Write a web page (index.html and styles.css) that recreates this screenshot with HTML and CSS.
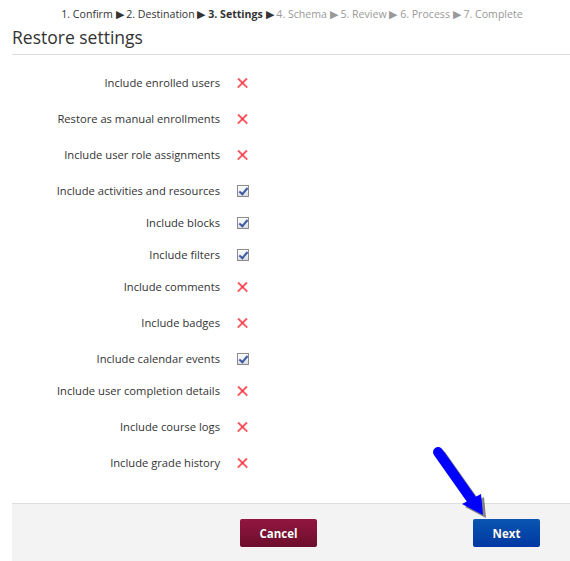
FILE: index.html
```html
<!DOCTYPE html>
<html lang="en">
<head>
  <meta charset="UTF-8">
  <title>Restore settings</title>
  <link rel="stylesheet" href="styles.css">
</head>
<body>

  <div class="steps">
    <span class="done">1. Confirm</span> &#9654;
    <span class="done">2. Destination</span> &#9654;
    <b class="done">3. Settings</b> &#9654;
    <span class="todo">4. Schema &#9654; 5. Review &#9654; 6. Process &#9654; 7. Complete</span>
  </div>

  <div class="page">
    <h2>Restore settings</h2>

    <div class="settings">
      <div class="row off"><span class="label">Include enrolled users</span><span class="no"></span></div>
      <div class="row off"><span class="label">Restore as manual enrollments</span><span class="no"></span></div>
      <div class="row off"><span class="label">Include user role assignments</span><span class="no"></span></div>
      <div class="row on"><span class="label">Include activities and resources</span><span class="yes"></span></div>
      <div class="row on"><span class="label">Include blocks</span><span class="yes"></span></div>
      <div class="row on"><span class="label">Include filters</span><span class="yes"></span></div>
      <div class="row off"><span class="label">Include comments</span><span class="no"></span></div>
      <div class="row off"><span class="label">Include badges</span><span class="no"></span></div>
      <div class="row on"><span class="label">Include calendar events</span><span class="yes"></span></div>
      <div class="row off"><span class="label">Include user completion details</span><span class="no"></span></div>
      <div class="row off"><span class="label">Include course logs</span><span class="no"></span></div>
      <div class="row off"><span class="label">Include grade history</span><span class="no"></span></div>
    </div>

    <div class="actions">
      <button class="btn cancel">Cancel</button>
      <button class="btn next">Next</button>
    </div>
  </div>

  <svg class="pointer" width="80" height="90" viewBox="0 0 80 90">
    <g transform="translate(3,3)" fill="#111" opacity="0.5">
      <line x1="18" y1="12" x2="54" y2="63" stroke="#111" stroke-width="10" stroke-linecap="round"/>
      <polygon points="42,64 61,54 63,75"/>
    </g>
    <line x1="18" y1="12" x2="54" y2="63" stroke="#0000ff" stroke-width="10" stroke-linecap="round"/>
    <polygon points="42,64 61,54 63,75" fill="#0000ff"/>
  </svg>

</body>
</html>
```

FILE: styles.css
```css
body {
  margin: 0;
  font-family: 'Open Sans', 'Liberation Sans', sans-serif;
  color: #333;
  background-color: #fff;
  position: relative;
  height: 561px;
  overflow: hidden;
}

.steps {
  text-align: center;
  font-size: 10.6px;
  padding-top: 7px;
  height: 14px;
  color: #333;
  padding-left: 14px;
}

.steps b {
  font-weight: 700;
}

.steps .todo {
  color: #999;
}

.page {
  margin-left: 12px;
}

h2 {
  margin: 0;
  font-size: 17.5px;
  font-weight: 400;
  line-height: 24px;
  padding-top: 4px;
  padding-bottom: 5px;
  border-bottom: 1px solid #ddd;
  color: #333;
}

.settings {
  padding-top: 11px;
  padding-bottom: 21px;
}

.row {
  display: flex;
  align-items: flex-start;
  height: 36px;
  padding-top: 11px;
  box-sizing: border-box;
  font-size: 11.2px;
}

.row.on {
  height: 32px;
}

.label {
  width: 208px;
  text-align: right;
  line-height: 12px;
}

.no {
  width: 11px;
  height: 11px;
  margin-left: 17px;
  margin-top: 1px;
  position: relative;
}

.no::before, .no::after {
  content: "";
  position: absolute;
  left: -1px;
  top: 4px;
  width: 13px;
  height: 2.4px;
  background-color: #f5333d;
  opacity: 0.8;
  transform: rotate(45deg);
}

.no::after {
  transform: rotate(-45deg);
}

.yes {
  width: 10px;
  height: 10px;
  margin-left: 17px;
  border: 1px solid #8a8a8a;
  background: linear-gradient(#fff, #dcdcdc);
  position: relative;
}

.yes::after {
  content: "";
  position: absolute;
  left: 3px;
  top: 0px;
  width: 3px;
  height: 7px;
  border-right: 2px solid #3a5aa8;
  border-bottom: 2px solid #3a5aa8;
  transform: rotate(40deg);
}

.actions {
  background-color: #f3f3f3;
  border-top: 1px solid #ddd;
  height: 60px;
  display: flex;
  align-items: flex-start;
  padding-top: 15px;
  padding-left: 228px;
}

.btn {
  font-family: 'Open Sans', 'Liberation Sans', sans-serif;
  font-size: 11.5px;
  font-weight: 700;
  color: #fff;
  border: none;
  border-radius: 2px;
  height: 28px;
  cursor: pointer;
  text-shadow: 0 0 1px rgba(0, 0, 0, 0.4);
}

.cancel {
  width: 77px;
  background: linear-gradient(#921640, #6c0e2c);
}

.next {
  width: 67px;
  margin-left: 156px;
  background: linear-gradient(#0a56b0, #0038a2);
}

.pointer {
  position: absolute;
  left: 420px;
  top: 440px;
}
```
